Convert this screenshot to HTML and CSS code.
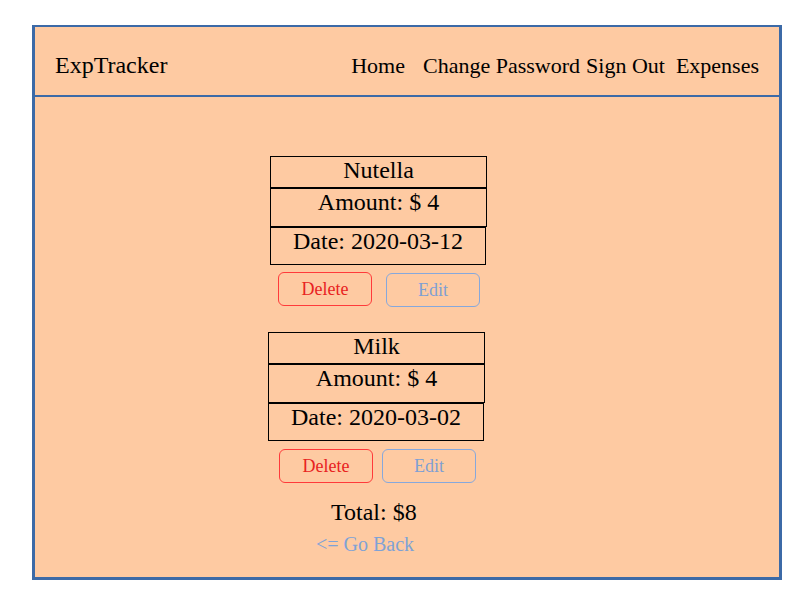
FILE: index.html
```html
<!DOCTYPE html>
<html lang="en">
<head>
<meta charset="utf-8">
<title>ExpTracker</title>
<link rel="stylesheet" href="styles.css">
</head>
<body>
<div class="app">
  <header class="topbar">
    <span class="brand">ExpTracker</span>
    <nav class="nav">
      <a class="nav-link nav-home">Home</a>
      <a class="nav-link nav-pass">Change Password</a>
      <a class="nav-link nav-out">Sign Out</a>
      <a class="nav-link nav-exp">Expenses</a>
    </nav>
  </header>
  <main class="content">
    <div class="card card-first">
      <div class="row row-name">Nutella</div>
      <div class="row row-amount">Amount: $ 4</div>
      <div class="row row-date">Date: 2020-03-12</div>
    </div>
    <div class="actions actions-first">
      <button class="btn btn-delete">Delete</button>
      <button class="btn btn-edit">Edit</button>
    </div>
    <div class="card card-second">
      <div class="row row-name">Milk</div>
      <div class="row row-amount">Amount: $ 4</div>
      <div class="row row-date">Date: 2020-03-02</div>
    </div>
    <div class="actions actions-second">
      <button class="btn btn-delete">Delete</button>
      <button class="btn btn-edit">Edit</button>
    </div>
    <div class="total">Total: $8</div>
    <a class="back">&lt;= Go Back</a>
  </main>
</div>
</body>
</html>
```
FILE: styles.css
```css
html, body {
  margin: 0;
  padding: 0;
  background: #ffffff;
}

body {
  padding: 25px 0 0 32px;
  font-family: "Liberation Serif", "Times New Roman", serif;
  color: #000;
}

.app {
  box-sizing: border-box;
  width: 750px;
  height: 555px;
  border: 3px solid #3c6aa7;
  border-top-width: 2px;
  border-bottom-width: 3px;
  background: #fecaa2;
  display: flex;
  flex-direction: column;
}

.topbar {
  box-sizing: border-box;
  height: 70px;
  padding: 25px 20px 0 20px;
  border-bottom: 2px solid #3c6aa7;
  display: flex;
  align-items: baseline;
}

.brand {
  font-size: 24px;
}

.nav {
  margin-left: auto;
  display: flex;
  align-items: baseline;
  font-size: 22px;
}

.nav-link {
  color: #000;
  text-decoration: none;
}

.nav-pass { margin-left: 18px; }
.nav-out { margin-left: 6px; }
.nav-exp { margin-left: 11px; }

.content {
  display: flex;
  flex-direction: column;
  align-items: flex-start;
}

.card {
  width: 217px;
  font-size: 24px;
  text-align: center;
}

.card-first {
  margin: 59px 0 0 235px;
}

.card-second {
  margin: 25px 0 0 233px;
}

.row {
  box-sizing: border-box;
  border: 1px solid #000;
  line-height: 26px;
}

.row-name { height: 32px; }
.row-amount { height: 39px; }
.row-date { height: 38px; width: 216px; }

.actions {
  display: flex;
  align-items: flex-start;
}

.actions-first {
  margin: 7px 0 0 243px;
  gap: 14px;
}

.actions-second {
  margin: 8px 0 0 244px;
  gap: 9px;
}

.btn {
  box-sizing: border-box;
  width: 94px;
  height: 34px;
  padding: 0;
  border-radius: 6px;
  background: transparent;
  font-family: "Liberation Serif", "Times New Roman", serif;
  font-size: 18px;
  cursor: pointer;
}

.btn-delete {
  border: 1px solid #ff3a3a;
  color: #e8231f;
}

.btn-edit {
  border: 1px solid #86a8dc;
  color: #7ea0d4;
}

.actions-first .btn-edit {
  margin-top: 1px;
}

.total {
  margin: 15px 0 0 296px;
  font-size: 24px;
  line-height: 28px;
}

.back {
  margin: 7px 0 0 281px;
  font-size: 20px;
  line-height: 23px;
  color: #7ea2d6;
  text-decoration: none;
}
```
